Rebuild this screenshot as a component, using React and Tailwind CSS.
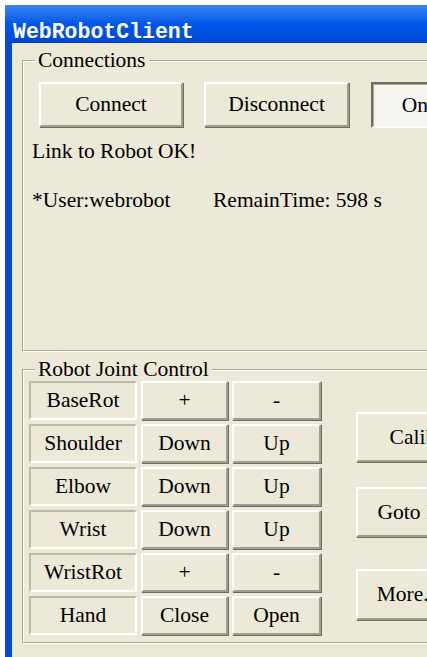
import React from "react";

const raised =
  "flex items-center justify-center bg-[#ece9d8] border-2 border-t-white border-l-white border-r-[#a09d8e] border-b-[#a09d8e] shadow-[1px_1px_0_#6f6d62]";
const sunken =
  "flex items-center justify-center bg-[#ece9d8] border-2 border-t-[#bcb9a9] border-l-[#bcb9a9] border-r-white border-b-white";
const pressed =
  "flex items-center justify-center bg-[#f5f4ee] border-2 border-t-[#716f64] border-l-[#716f64] border-r-white border-b-white shadow-[inset_1px_1px_0_#aca899]";

const groupBox =
  "border border-[#aca899] shadow-[inset_1px_1px_0_#fff,1px_1px_0_#fff] ml-[10px] w-[480px]";

const joints = [
  ["BaseRot", "+", "-"],
  ["Shoulder", "Down", "Up"],
  ["Elbow", "Down", "Up"],
  ["Wrist", "Down", "Up"],
  ["WristRot", "+", "-"],
  ["Hand", "Close", "Open"],
];

function GroupLabel({ children }) {
  return (
    <legend className="ml-[12px] px-[3px] bg-[#ece9d8] leading-[24px]">{children}</legend>
  );
}

export default function App() {
  return (
    <div className="w-[427px] h-[657px] overflow-hidden bg-white pt-[5px] pl-[5px] text-black text-[21.5px] font-['Liberation_Serif','DejaVu_Serif',serif]">
      <div className="w-[520px] h-[660px] flex flex-col bg-[#0848d8]">
        {/* title bar */}
        <div className="h-[38px] shrink-0 bg-linear-to-b from-[#3a86f5] via-[#0057e8] to-[#0048d6] border-b border-[#003cbb] pl-[8px] pt-[10px]">
          <span className="text-white font-bold leading-[24px] text-[21.5px] font-['Liberation_Mono','DejaVu_Sans_Mono',monospace]">
            WebRobotClient
          </span>
        </div>

        {/* client area */}
        <div className="flex-1 ml-[7px] mb-[7px] bg-[#ece9d8] pt-[5px]">
          <fieldset className={`${groupBox} h-[303px]`}>
            <GroupLabel>Connections</GroupLabel>
            <div className="flex pl-[16px] pt-[10px]">
              <button className={`${raised} w-[144px] h-[45px]`}>Connect</button>
              <button className={`${raised} w-[145px] h-[45px] ml-[21px]`}>Disconnect</button>
              <button className={`${pressed} w-[120px] h-[46px] ml-[22px]`}>Online</button>
            </div>
            <div className="pl-[9px] pt-[11px] leading-[24px]">
              <p>Link to Robot OK!</p>
              <p className="flex mt-[25px]">
                <span className="w-[181px]">*User:webrobot</span>
                <span>RemainTime: 598 s</span>
              </p>
            </div>
          </fieldset>

          <fieldset className={`${groupBox} h-[286px] mt-[6px]`}>
            <GroupLabel>Robot Joint Control</GroupLabel>
            <div className="flex pl-[6px]">
              <div className="grid grid-cols-[108px_87px_89px] auto-rows-[39px] gap-x-[4px] gap-y-[4px]">
                {joints.map(([name, a, b]) => (
                  <React.Fragment key={name}>
                    <div className={sunken}>{name}</div>
                    <button className={raised}>{a}</button>
                    <button className={raised}>{b}</button>
                  </React.Fragment>
                ))}
              </div>
              <div className="flex flex-col ml-[35px] pt-[31px]">
                <button className={`${raised} w-[146px] h-[50px]`}>Calibrate</button>
                <button className={`${raised} w-[144px] h-[50px] mt-[25px]`}>Goto Home</button>
                <button className={`${raised} w-[104px] h-[51px] mt-[32px]`}>More...</button>
              </div>
            </div>
          </fieldset>
        </div>
      </div>
    </div>
  );
}
